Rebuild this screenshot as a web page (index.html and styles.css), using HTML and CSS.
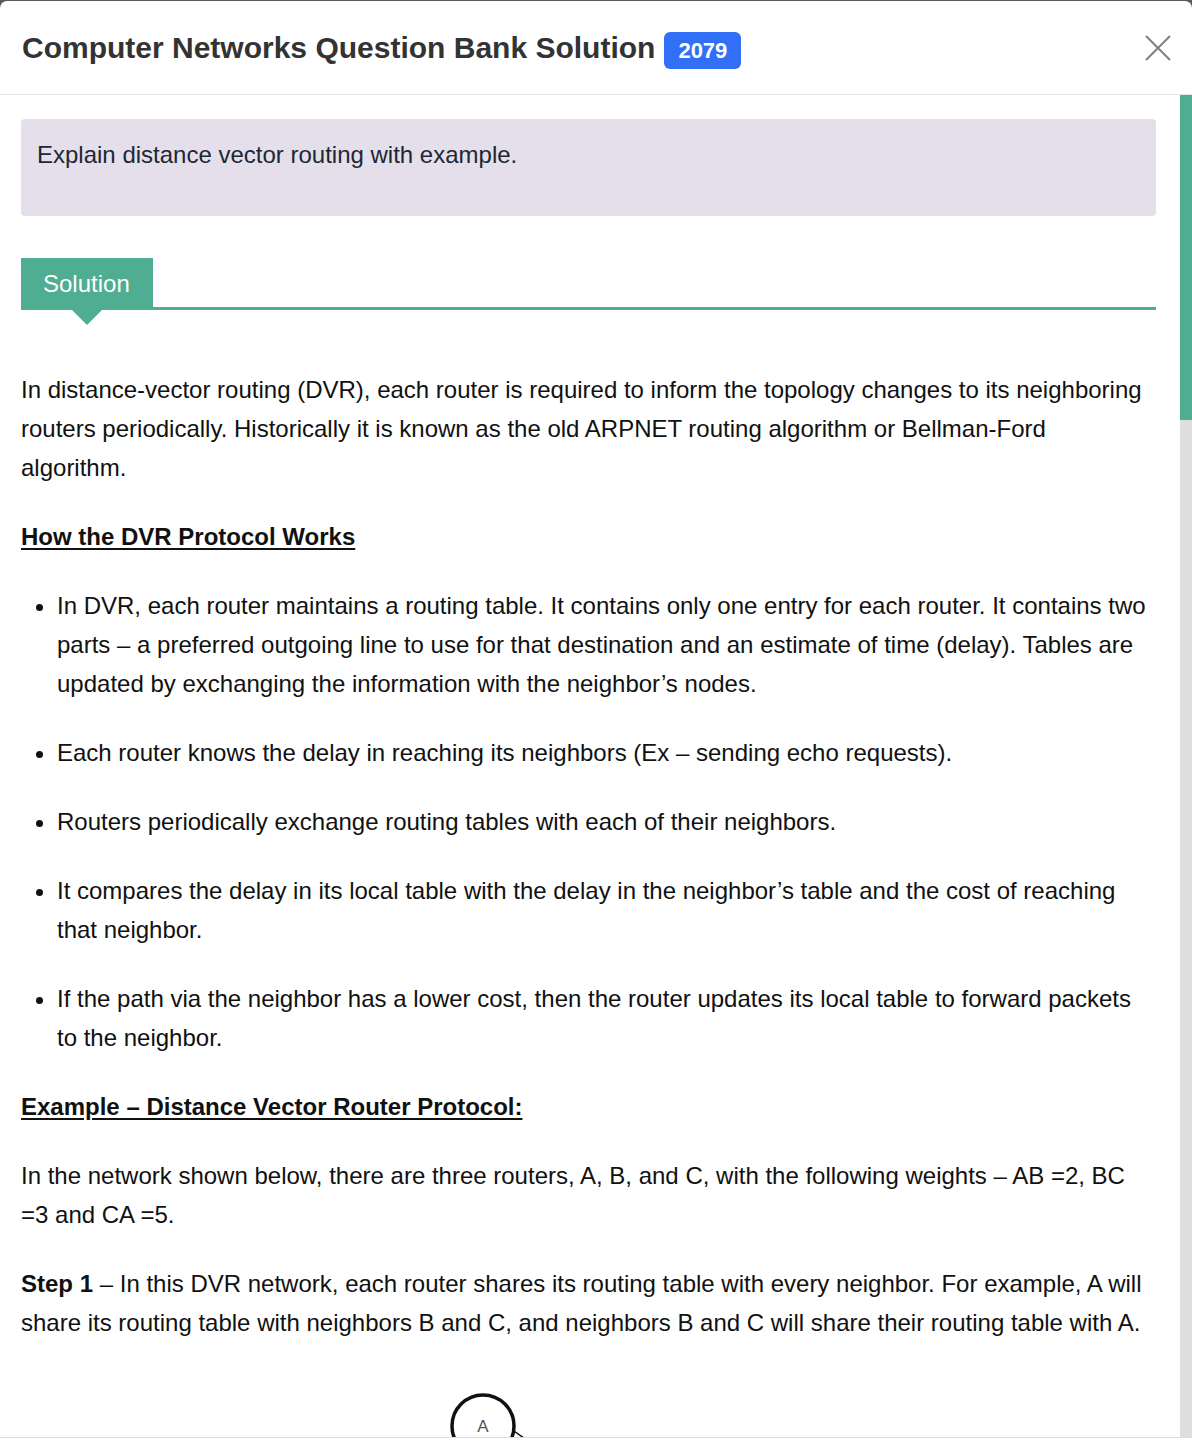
FILE: index.html
```html
<!DOCTYPE html>
<html lang="en">
<head>
<meta charset="utf-8">
<title>Computer Networks Question Bank Solution</title>
<link rel="stylesheet" href="styles.css">
</head>
<body>
<div class="modal">
  <header class="modal-header">
    <h1 class="modal-title">Computer Networks Question Bank Solution</h1>
    <span class="badge">2079</span>
    <button class="close" aria-label="Close">
      <svg width="26" height="26" viewBox="0 0 26 26"><path d="M1 1 L25 25 M25 1 L1 25" stroke="#7f7f7f" stroke-width="2" fill="none"/></svg>
    </button>
  </header>
  <div class="modal-body">
    <div class="viewport">
      <div class="content">
        <div class="question">Explain distance vector routing with example.</div>
        <div class="tabbar">
          <div class="tab">Solution</div>
        </div>
        <div class="answer">
          <p>In distance-vector routing (DVR), each router is required to inform the topology changes to its neighboring routers periodically. Historically it is known as the old ARPNET routing algorithm or Bellman-Ford algorithm.</p>
          <p class="heading">How the DVR Protocol Works</p>
          <ul>
            <li>In DVR, each router maintains a routing table. It contains only one entry for each router. It contains two parts – a preferred outgoing line to use for that destination and an estimate of time (delay). Tables are updated by exchanging the information with the neighbor’s nodes.</li>
            <li>Each router knows the delay in reaching its neighbors (Ex – sending echo requests).</li>
            <li>Routers periodically exchange routing tables with each of their neighbors.</li>
            <li>It compares the delay in its local table with the delay in the neighbor’s table and the cost of reaching that neighbor.</li>
            <li>If the path via the neighbor has a lower cost, then the router updates its local table to forward packets to the neighbor.</li>
          </ul>
          <p class="heading">Example – Distance Vector Router Protocol:</p>
          <p>In the network shown below, there are three routers, A, B, and C, with the following weights – AB =2, BC =3 and CA =5.</p>
          <p><strong>Step 1</strong> – In this DVR network, each router shares its routing table with every neighbor. For example, A will share its routing table with neighbors B and C, and neighbors B and C will share their routing table with A.</p>
          <div class="diagram">
            <svg width="1135" height="340" viewBox="0 0 1135 340">
              <g fill="none" stroke="#111" stroke-width="1.5">
                <line x1="490" y1="57" x2="700" y2="203"/>
                <line x1="455" y1="84" x2="530" y2="280"/>
                <line x1="705" y1="235" x2="565" y2="300"/>
              </g>
              <g fill="#fff" stroke="#111" stroke-width="3.5">
                <circle cx="462" cy="54" r="31"/>
                <circle cx="725" cy="220" r="31"/>
                <circle cx="540" cy="305" r="31"/>
              </g>
              <g class="node-label">
                <text x="462" y="60" text-anchor="middle">A</text>
                <text x="725" y="226" text-anchor="middle">B</text>
                <text x="540" y="311" text-anchor="middle">C</text>
              </g>
            </svg>
          </div>
        </div>
      </div>
    </div>
    <div class="scrollbar" aria-hidden="true"><div class="thumb"></div></div>
  </div>
  <div class="modal-footer"></div>
</div>
</body>
</html>
```

FILE: styles.css
```css
* { box-sizing: border-box; }
html, body { margin: 0; padding: 0; }
body {
  background: #5a5a5a;
  font-family: "Liberation Sans", Arial, Helvetica, sans-serif;
  height: 1442px;
  overflow: hidden;
}
.modal {
  margin-top: 1px;
  background: #fff;
  border-radius: 7px 7px 0 0;
  height: 1441px;
  display: flex;
  flex-direction: column;
}
.modal-header {
  height: 94px;
  flex: none;
  border-bottom: 1px solid #e4e3ea;
  display: flex;
  align-items: center;
  padding: 0 21px 0 22px;
}
.modal-title {
  margin: 0;
  font-size: 30px;
  font-weight: 700;
  color: #333;
  line-height: 1;
}
.badge {
  margin-left: 9px;
  margin-top: 5px;
  background: #316ff6;
  color: #fff;
  font-weight: 700;
  font-size: 22px;
  height: 37px;
  line-height: 37px;
  padding: 0 14px;
  border-radius: 6px;
}
.close {
  margin-left: auto;
  background: none;
  border: 0;
  padding: 0;
  width: 26px;
  height: 26px;
  display: flex;
  cursor: pointer;
}
.modal-body {
  height: 1342px;
  flex: none;
  display: flex;
}
.viewport {
  flex: 1;
  overflow: hidden;
}
.scrollbar {
  width: 12px;
  flex: none;
  background: #dedede;
}
.thumb {
  height: 325px;
  background: #4fad91;
}
.modal-footer {
  border-top: 1px solid #dcdcdc;
  flex: 1;
}
.content {
  padding: 24px 24px 0 21px;
}
.question {
  background: #e5dfec;
  border-radius: 4px;
  padding: 21px 16px 46px;
  font-size: 24px;
  line-height: 30px;
  color: #1e2733;
}
.tabbar {
  margin-top: 42px;
  border-bottom: 3px solid #4fad91;
  display: flex;
}
.tab {
  position: relative;
  background: #4fad91;
  color: #fff;
  font-size: 24px;
  padding: 0 23px 0 22px;
  margin-bottom: -3px;
  height: 52px;
  line-height: 52px;
}
.tab::after {
  content: "";
  position: absolute;
  left: 50%;
  top: 100%;
  margin-left: -15px;
  border-left: 15px solid transparent;
  border-right: 15px solid transparent;
  border-top: 15px solid #4fad91;
}
.answer {
  padding-top: 60px;
  font-size: 24px;
  line-height: 39px;
  color: #111;
}
.answer p { margin: 0 0 30px; }
.answer .heading {
  font-weight: 700;
  text-decoration: underline;
  text-underline-offset: 3px;
}
.answer ul {
  margin: 0 0 30px;
  padding-left: 36px;
}
.answer li { margin-bottom: 30px; }
.answer li:last-child { margin-bottom: 0; }
.diagram svg { display: block; }
.node-label text {
  font-family: "Liberation Sans", Arial, sans-serif;
  font-size: 17px;
  fill: #555;
}
```
